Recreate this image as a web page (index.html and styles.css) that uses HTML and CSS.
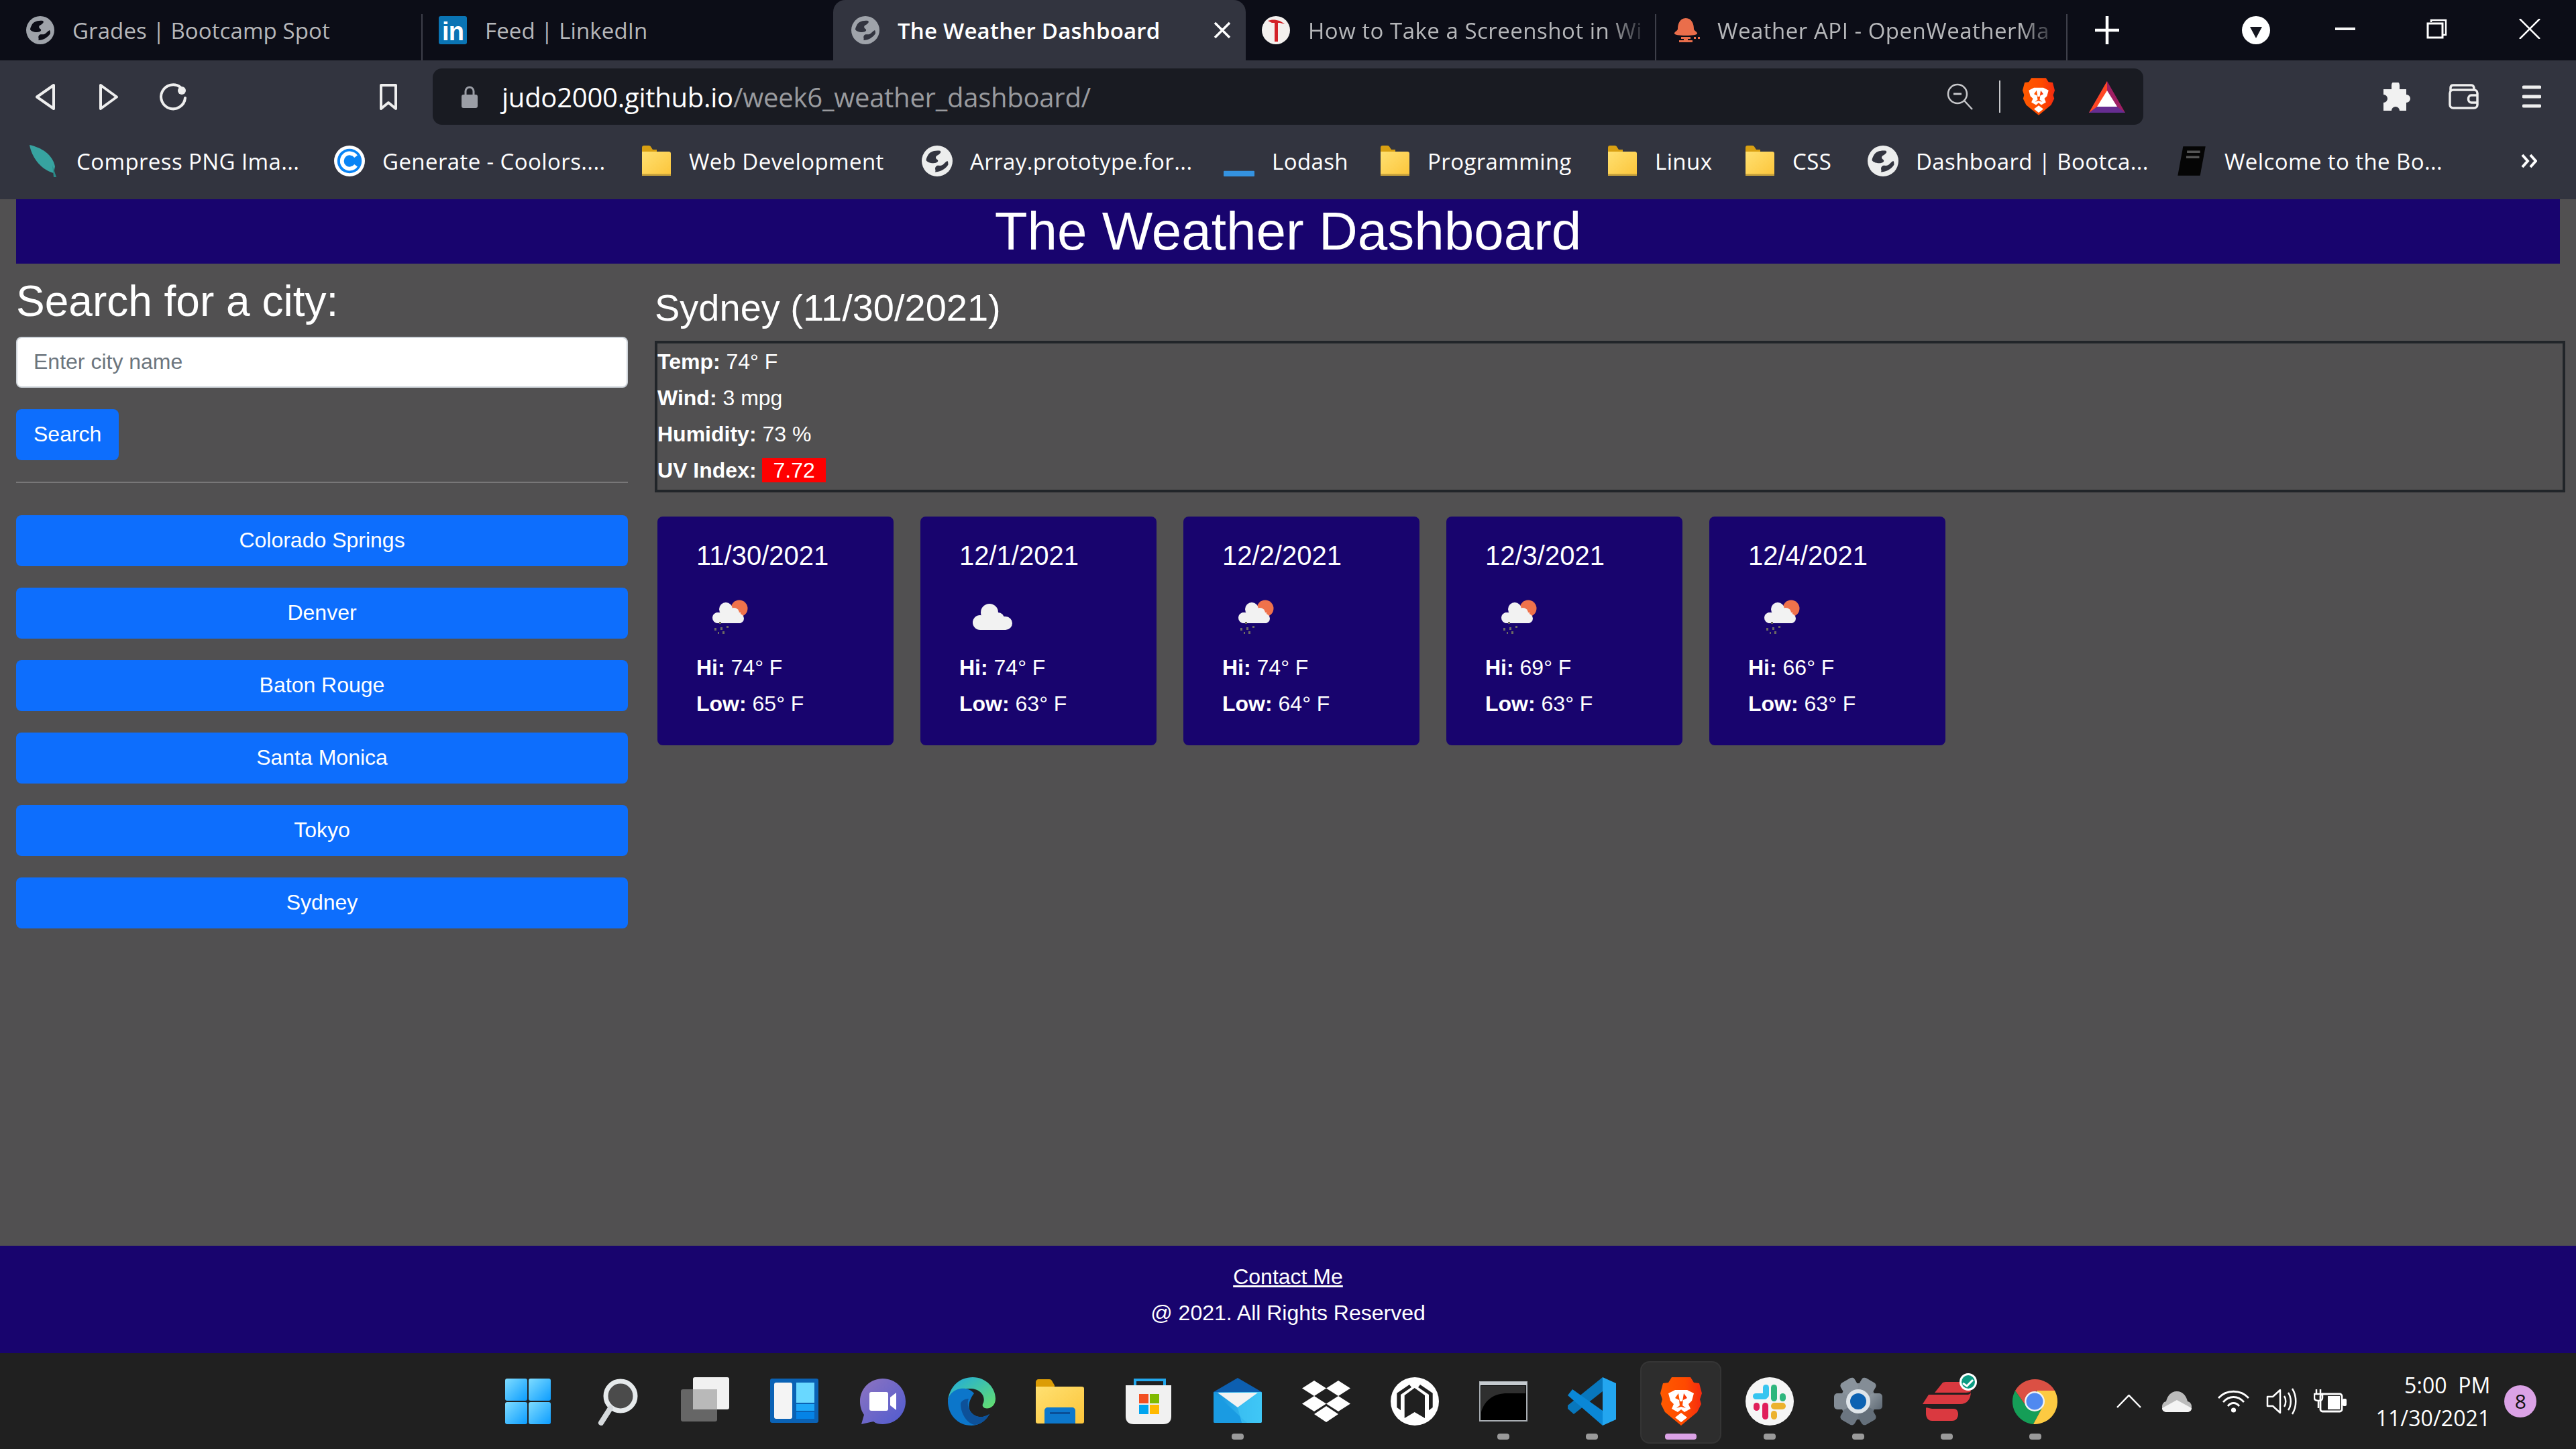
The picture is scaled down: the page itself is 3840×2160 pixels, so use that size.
FILE: index.html
```html
<!DOCTYPE html>
<html lang="en">
<head>
    <meta charset="UTF-8">
    <title>The Weather Dashboard</title>
    <link rel="stylesheet" href="styles.css">
</head>
<body>
    <svg class="defs" width="0" height="0">
        <defs>
            <linearGradient id="folderFill" x1="0" y1="0" x2="1" y2="1"><stop offset="0" stop-color="#ffe071"/><stop offset="1" stop-color="#fcc53a"/></linearGradient>
            <linearGradient id="tileFill" x1="0" y1="0" x2="1" y2="1"><stop offset="0" stop-color="#7fdcff"/><stop offset="1" stop-color="#0c9dff"/></linearGradient>
            <linearGradient id="braveFill" x1="0" y1="0" x2="1" y2="0"><stop offset="0" stop-color="#ff5a00"/><stop offset="0.6" stop-color="#ff4a00"/><stop offset="1" stop-color="#f52a10"/></linearGradient>
            <linearGradient id="edgeTop" x1="0" y1="0" x2="1" y2="1"><stop offset="0" stop-color="#1ea9e0"/><stop offset="1" stop-color="#66e06c"/></linearGradient>
            <linearGradient id="teamsFill" x1="0" y1="0" x2="1" y2="1"><stop offset="0" stop-color="#8e74c0"/><stop offset="1" stop-color="#4f5bd0"/></linearGradient>
            <linearGradient id="mailFill" x1="0" y1="0" x2="1" y2="0"><stop offset="0" stop-color="#1590dc"/><stop offset="1" stop-color="#44cdf8"/></linearGradient>
            <linearGradient id="gearFill" x1="0" y1="0" x2="1" y2="1"><stop offset="0" stop-color="#929ba3"/><stop offset="1" stop-color="#5d6873"/></linearGradient>
            <symbol id="globe" viewBox="0 0 42 42">
                <circle cx="21" cy="21" r="21" fill="currentColor"/>
                <path class="globe-hole" d="M8 14C10 9 16 6 25 7C27 9 25 11 22 13C19 14 18 17 21 19C24 21 21 24 16 24C11 24 7 22 6 20C6 18 7 16 8 14Z"/>
                <path class="globe-hole" d="M35 21C36 22 36 24 36 26C33 31 26 36 18 36C20 34 17 32 19 29C21 26 24 28 27 27C30 26 32 22 35 21Z"/>
            </symbol>
            <symbol id="folder" viewBox="0 0 46 46">
                <path fill="#d9a012" d="M2 3C2 1 3 0 5 0H12C14 0 15 1 16 3L18 6H24V14H2Z"/>
                <path fill="url(#folderFill)" d="M2 9H42C44 9 45 10 45 12V42C45 44 44 45 42 45H4C3 45 2 44 2 42Z"/>
                <rect x="2" y="42" width="43" height="3" fill="#c9a33c"/>
            </symbol>
            <symbol id="lion" viewBox="0 0 62 72">
                <path fill="url(#braveFill)" d="M17 0H45L50 8L58 9L62 24L59 33L61 40L55 52L31 72L7 52L1 40L3 33L0 24L4 9L12 8Z"/>
                <path fill="#fff" d="M12 24L22 19H40L50 24L47 35L42 40L45 47L36 52L31 48L26 52L17 47L20 40L15 35Z"/>
                <path fill="url(#braveFill)" d="M27 24L22 31L28 34L29 42L24 46L31 44L38 46L33 42L34 34L40 31L35 24L33 36H29Z"/>
                <path fill="#fff" d="M31 53L40 60L31 67L22 60Z"/>
            </symbol>
            <symbol id="rainIcon" viewBox="0 0 100 100">
                <circle cx="66" cy="40" r="12.5" fill="#f0724b"/>
                <g fill="#f2f2f2">
                    <circle cx="46" cy="41" r="10"/>
                    <circle cx="34" cy="54" r="8"/>
                    <circle cx="58" cy="47" r="8"/>
                    <circle cx="66" cy="55" r="7"/>
                    <rect x="32" y="46" width="36" height="16"/>
                </g>
                <g fill="#6d6a62">
                    <rect x="36" y="60" width="3" height="3"/>
                    <rect x="29" y="69" width="3" height="4"/>
                    <rect x="38" y="68" width="3" height="4"/>
                    <rect x="47" y="66" width="3" height="3"/>
                    <rect x="34" y="75" width="2" height="3"/>
                    <rect x="41" y="74" width="3" height="4"/>
                </g>
            </symbol>
            <symbol id="cloudIcon" viewBox="0 0 100 100">
                <g fill="#f2f2f2">
                    <circle cx="47" cy="46" r="13"/>
                    <circle cx="33" cy="61" r="11"/>
                    <circle cx="60" cy="55" r="9"/>
                    <circle cx="71" cy="62" r="10"/>
                    <rect x="33" y="52" width="38" height="20"/>
                </g>
            </symbol>
        </defs>
    </svg>

    <div class="tabstrip">
        <div class="tab tab-first">
            <svg class="favicon globe-dim"><use href="#globe"/></svg>
            <span class="tab-title">Grades | Bootcamp Spot</span>
        </div>
        <div class="tab tab-divided tab-second">
            <span class="favicon linkedin">in</span>
            <span class="tab-title">Feed | LinkedIn</span>
        </div>
        <div class="tab tab-active">
            <svg class="favicon globe-dim"><use href="#globe"/></svg>
            <span class="tab-title">The Weather Dashboard</span>
            <svg class="tab-close" viewBox="0 0 26 26"><path d="M2 2L24 24M24 2L2 24" stroke="#fff" stroke-width="3.5"/></svg>
        </div>
        <div class="tab">
            <svg class="favicon" viewBox="0 0 42 42"><circle cx="21" cy="21" r="21" fill="#f4f0ee"/><path d="M9 7C16 4 27 5 34 12L27 10H24V38H19V10H15Z" fill="#d32027"/></svg>
            <span class="tab-title tab-fade">How to Take a Screenshot in Wi</span>
        </div>
        <div class="tab tab-divided">
            <svg class="favicon favicon-wide" viewBox="0 0 45 36"><path d="M22 0C31 0 34 9 34 16C34 19 39 20 39 23C39 25 32 26 22 26C12 26 5 25 5 23C5 20 10 19 10 16C10 9 13 0 22 0Z" fill="#ea6e4b"/><path d="M15 28H29V31H25V33H32V36H12V33H19V31H15Z" fill="#ea6e4b"/><path d="M34 28H37V31H34ZM40 28H43V31H40Z" fill="#ea6e4b"/></svg>
            <span class="tab-title tab-fade">Weather API - OpenWeatherMa</span>
        </div>
        <div class="window-controls tab-divided">
            <svg class="ctl-plus" viewBox="0 0 36 44"><path d="M18 1V43M0 22H36" stroke="#fff" stroke-width="4.5"/></svg>
            <svg class="ctl-circle" viewBox="0 0 42 42"><circle cx="21" cy="21" r="21" fill="#fff"/><path d="M12 16H30L21 33Z" fill="#15161f"/></svg>
            <svg class="ctl-min" viewBox="0 0 30 4"><rect width="30" height="4" fill="#f4f4f4"/></svg>
            <svg class="ctl-restore" viewBox="0 0 31 30"><path d="M7 5V2H29V24H25" fill="none" stroke="#fff" stroke-width="2.5"/><rect x="2" y="7" width="22" height="21" fill="none" stroke="#fff" stroke-width="3"/></svg>
            <svg class="ctl-close" viewBox="0 0 32 30"><path d="M1 0L31 30M31 0L1 30" stroke="#fff" stroke-width="2.5"/></svg>
        </div>
    </div>

    <div class="toolbar">
        <svg class="nav-back" viewBox="0 0 32 41"><path d="M29 3L4 20.5L29 38Z" fill="none" stroke="#eee" stroke-width="4" stroke-linejoin="round"/></svg>
        <svg class="nav-forward" viewBox="0 0 30 41"><path d="M3 3L27 20.5L3 38Z" fill="none" stroke="#eee" stroke-width="4" stroke-linejoin="round"/></svg>
        <svg class="nav-reload" viewBox="0 0 40 41"><path d="M31 6A18 18 0 1 0 38 22" fill="none" stroke="#eee" stroke-width="4" stroke-linecap="round"/><circle cx="33" cy="11" r="6" fill="#eee"/></svg>
        <svg class="nav-bookmark" viewBox="0 0 28 41"><path d="M3 3H25V38L14 29L3 38Z" fill="none" stroke="#eee" stroke-width="4" stroke-linejoin="round"/></svg>
        <div class="addressbar">
            <svg class="lock" viewBox="0 0 24 33"><path d="M6 14V8A6 6 0 0 1 18 8V14" fill="none" stroke="#9b9ea6" stroke-width="3"/><rect y="13" width="24" height="20" rx="3" fill="#9b9ea6"/></svg>
            <div class="url">judo2000.github.io<span class="url-path">/week6_weather_dashboard/</span></div>
            <svg class="zoom-out" viewBox="0 0 40 40"><circle cx="16" cy="16" r="14" fill="none" stroke="#c6c7ca" stroke-width="2.5"/><path d="M10 16H22" stroke="#c6c7ca" stroke-width="3"/><path d="M26 26L38 39" stroke="#c6c7ca" stroke-width="2.5"/></svg>
            <span class="addr-sep"></span>
            <svg class="addr-brave"><use href="#lion"/></svg>
            <svg class="addr-bat" viewBox="0 0 54 47"><path d="M27 0L54 47H0Z" fill="#9e1f63"/><path d="M27 0L0 47H14L27 18Z" fill="#ff4724"/><path d="M27 14L42 38H12Z" fill="#fff"/><path d="M12 38H42L54 47H0Z" fill="#662d91"/></svg>
        </div>
        <svg class="tool-puzzle" viewBox="0 0 44 42"><path d="M16 4A6 6 0 0 1 28 4V10H38V18A6 6 0 1 1 38 30V42H28A6 6 0 0 0 16 42H4V30A6 6 0 1 0 4 18V10H16Z" fill="#f1f1f1"/></svg>
        <svg class="tool-wallet" viewBox="0 0 45 38"><path d="M3 10V6C3 3 5 2 7 2H34C37 2 38 4 38 8" fill="none" stroke="#eee" stroke-width="3.5"/><rect x="2" y="9" width="41" height="27" rx="5" fill="none" stroke="#eee" stroke-width="3.5"/><path d="M44 17H34C28 17 28 28 34 28H44" fill="none" stroke="#eee" stroke-width="3.5"/></svg>
        <svg class="tool-menu" viewBox="0 0 28 34"><path d="M2 3H26M2 17H26M2 31H26" stroke="#eee" stroke-width="5" stroke-linecap="round"/></svg>
    </div>

    <div class="bookmarks">
        <div class="bookmark">
            <svg class="bm-icon bm-leaf" viewBox="0 0 46 48"><path d="M2 0C20 4 36 14 40 32L38 42C22 38 6 22 2 0Z" fill="#37a3a0"/><path d="M36 30L42 48H38Z" fill="#2a8a88"/></svg>
            <span>Compress PNG Ima...</span>
        </div>
        <div class="bookmark">
            <svg class="bm-icon" viewBox="0 0 48 48"><circle cx="24" cy="24" r="24" fill="#fff"/><circle cx="24" cy="24" r="19" fill="#0a84f5"/><path d="M34 17A12 12 0 1 0 34 31" fill="none" stroke="#fff" stroke-width="6"/></svg>
            <span>Generate - Coolors....</span>
        </div>
        <div class="bookmark"><svg class="bm-icon"><use href="#folder"/></svg><span>Web Development</span></div>
        <div class="bookmark"><svg class="bm-icon globe-light"><use href="#globe"/></svg><span>Array.prototype.for...</span></div>
        <div class="bookmark">
            <svg class="bm-icon" viewBox="0 0 44 44"><rect y="36" width="44" height="8" rx="1" fill="#3492e0"/></svg>
            <span>Lodash</span>
        </div>
        <div class="bookmark"><svg class="bm-icon"><use href="#folder"/></svg><span>Programming</span></div>
        <div class="bookmark"><svg class="bm-icon"><use href="#folder"/></svg><span>Linux</span></div>
        <div class="bookmark"><svg class="bm-icon"><use href="#folder"/></svg><span>CSS</span></div>
        <div class="bookmark"><svg class="bm-icon globe-light"><use href="#globe"/></svg><span>Dashboard | Bootca...</span></div>
        <div class="bookmark">
            <svg class="bm-icon" viewBox="0 0 40 40"><path d="M9 1H38L31 39H2Z" fill="#050505"/><path d="M14 8H31M13 15H30" stroke="#555" stroke-width="3"/></svg>
            <span>Welcome to the Bo...</span>
        </div>
        <div class="bookmark bm-more">
            <svg viewBox="0 0 24 22" width="24" height="22"><path d="M2 2L10 11L2 20M14 2L22 11L14 20" fill="none" stroke="#fff" stroke-width="4"/></svg>
        </div>
    </div>

    <header class="site-header">
        <h1>The Weather Dashboard</h1>
    </header>

    <main class="main">
        <section class="sidebar">
            <h2>Search for a city:</h2>
            <input class="city-input" type="text" placeholder="Enter city name">
            <button class="btn btn-search">Search</button>
            <hr class="divider">
            <div class="city-list">
                <button class="btn">Colorado Springs</button>
                <button class="btn">Denver</button>
                <button class="btn">Baton Rouge</button>
                <button class="btn">Santa Monica</button>
                <button class="btn">Tokyo</button>
                <button class="btn">Sydney</button>
            </div>
        </section>

        <section class="content">
            <h3>Sydney (11/30/2021)</h3>
            <div class="today">
                <p><b>Temp:</b> 74° F</p>
                <p><b>Wind:</b> 3 mpg</p>
                <p><b>Humidity:</b> 73 %</p>
                <p><b>UV Index:</b> <span class="uv">7.72</span></p>
            </div>
            <div class="forecast">
                <div class="card">
                    <h5>11/30/2021</h5>
                    <svg class="weather-icon"><use href="#rainIcon"/></svg>
                    <p><b>Hi:</b> 74° F</p>
                    <p><b>Low:</b> 65° F</p>
                </div>
                <div class="card">
                    <h5>12/1/2021</h5>
                    <svg class="weather-icon"><use href="#cloudIcon"/></svg>
                    <p><b>Hi:</b> 74° F</p>
                    <p><b>Low:</b> 63° F</p>
                </div>
                <div class="card">
                    <h5>12/2/2021</h5>
                    <svg class="weather-icon"><use href="#rainIcon"/></svg>
                    <p><b>Hi:</b> 74° F</p>
                    <p><b>Low:</b> 64° F</p>
                </div>
                <div class="card">
                    <h5>12/3/2021</h5>
                    <svg class="weather-icon"><use href="#rainIcon"/></svg>
                    <p><b>Hi:</b> 69° F</p>
                    <p><b>Low:</b> 63° F</p>
                </div>
                <div class="card">
                    <h5>12/4/2021</h5>
                    <svg class="weather-icon"><use href="#rainIcon"/></svg>
                    <p><b>Hi:</b> 66° F</p>
                    <p><b>Low:</b> 63° F</p>
                </div>
            </div>
        </section>
    </main>

    <footer class="site-footer">
        <a href="#">Contact Me</a>
        <p>@ 2021. All Rights Reserved</p>
    </footer>

    <div class="taskbar">
        <div class="task-icons">
            <div class="task">
                <svg viewBox="0 0 72 72"><g fill="url(#tileFill)"><rect x="2" y="2" width="33" height="33" rx="3"/><rect x="37" y="2" width="33" height="33" rx="3"/><rect x="2" y="37" width="33" height="33" rx="3"/><rect x="37" y="37" width="33" height="33" rx="3"/></g></svg>
            </div>
            <div class="task">
                <svg viewBox="0 0 72 72"><circle cx="42" cy="28" r="22" fill="#4b4b4b" stroke="#e6eaec" stroke-width="7"/><path d="M27 46L13 68" stroke="#d5d9dc" stroke-width="8" stroke-linecap="round"/></svg>
            </div>
            <div class="task">
                <svg viewBox="0 0 72 72"><rect x="0" y="18" width="54" height="48" rx="3" fill="#666"/><rect x="18" y="0" width="54" height="48" rx="3" fill="#f1f1f1"/><rect x="18" y="18" width="36" height="30" fill="#b9b9b9"/></svg>
            </div>
            <div class="task">
                <svg viewBox="0 0 72 72"><rect y="2" width="72" height="66" rx="3" fill="#0a62b5"/><rect x="6" y="8" width="27" height="54" rx="3" fill="#f4f4f4"/><rect x="39" y="8" width="27" height="30" fill="#69d8ff"/><rect x="39" y="40" width="27" height="10" fill="#1ea8f8"/><rect x="39" y="52" width="27" height="10" fill="#0583e6"/></svg>
            </div>
            <div class="task">
                <svg viewBox="0 0 72 72"><path d="M36 2C54 2 70 16 70 36C70 56 54 70 36 70C30 70 26 69 22 66L4 70L8 56C4 50 2 44 2 36C2 16 18 2 36 2Z" fill="url(#teamsFill)"/><rect x="16" y="22" width="28" height="28" rx="3" fill="#fff"/><path d="M47 30L56 23V49L47 42Z" fill="#fff"/></svg>
            </div>
            <div class="task">
                <svg viewBox="0 0 72 72"><path d="M1 34C4 14 18 0 38 0C58 0 72 16 72 32C72 44 62 48 56 46C52 44 52 41 54 38C57 31 52 18 36 17C22 16 8 24 1 34Z" fill="url(#edgeTop)"/><path d="M1 36C1 56 16 72 36 72C46 72 56 67 63 55C52 62 40 60 34 50C30 42 34 32 40 24C28 10 2 18 1 36Z" fill="#0c76ca"/><path d="M20 40C20 54 30 70 42 71C50 70 58 64 63 55C52 62 40 60 34 50C30 44 30 36 32 32C26 32 20 36 20 40Z" fill="#0d5199"/></svg>
            </div>
            <div class="task">
                <svg viewBox="0 0 72 72"><path d="M0 7C0 5 2 3 4 3H20C23 3 24 5 25 7L28 12V20H0Z" fill="#dc9d06"/><path d="M0 14H68C71 14 72 15 72 17V66C72 68 71 69 69 69H3C1 69 0 68 0 66Z" fill="url(#folderFill)"/><path d="M13 69V50C13 47 15 45 18 45H54C57 45 59 47 59 50V69Z" fill="#0d78cc"/><rect x="21" y="52" width="30" height="3" fill="#0a4f97"/></svg>
            </div>
            <div class="task">
                <svg viewBox="0 0 72 72"><path d="M16 16V4H60V18" fill="none" stroke="#22a8ee" stroke-width="4"/><path d="M2 12H70V58C70 66 66 70 58 70H14C6 70 2 66 2 58Z" fill="#f1f1f1"/><rect x="22" y="25" width="14" height="14" fill="#f25022"/><rect x="38" y="25" width="14" height="14" fill="#7fba00"/><rect x="22" y="41" width="14" height="14" fill="#00a4ef"/><rect x="38" y="41" width="14" height="14" fill="#ffb900"/></svg>
            </div>
            <div class="task">
                <svg viewBox="0 0 72 72"><path d="M36 1L72 22V30H0V22Z" fill="#0d5fb0"/><rect y="22" width="72" height="46" rx="2" fill="url(#mailFill)"/><path d="M6 23H66L36 45Z" fill="#f2f2f2"/><path d="M0 22L50 68H2C1 68 0 67 0 66Z" fill="#1a9be2"/><path d="M72 22V66C72 67 71 68 70 68H42L36 45Z" fill="#3fc4f5" opacity="0.7"/></svg>
                <span class="dot"></span>
            </div>
            <div class="task">
                <svg viewBox="0 0 72 72"><path fill="#fff" d="M18 5L36 16.5L18 28L0 16.5ZM54 5L72 16.5L54 28L36 16.5ZM18 28L36 39.5L18 51L0 39.5ZM54 28L72 39.5L54 51L36 39.5ZM36 43L54 55L36 67L18 55Z"/></svg>
            </div>
            <div class="task">
                <svg viewBox="0 0 72 72"><circle cx="36" cy="36" r="36" fill="#fff"/><path fill="#202020" d="M35.7 16L51 27V61L35.7 52L20.7 61V27Z"/><path fill="#202020" d="M28 11L9.3 23.7V45L15 49.3V26L31 15Z"/><path fill="#202020" d="M44 11L62.7 23.7V45L57 49.3V26L41 15Z"/></svg>
            </div>
            <div class="task">
                <svg viewBox="0 0 72 72"><rect x="1" y="7" width="70" height="58" fill="#000" stroke="#a9aeb3" stroke-width="2"/><rect x="1" y="7" width="70" height="5" fill="#c6cbd0"/><path d="M3 52C8 34 22 24 42 24H69V13H3Z" fill="#2f2f2f"/></svg>
                <span class="dot"></span>
            </div>
            <div class="task">
                <svg viewBox="0 0 72 72"><path d="M52 0L72 9V63L52 72Z" fill="#23a6f0"/><path d="M52 0V21L9 55L0 47V42Z" fill="#0877bd"/><path d="M0 27L7 18L52 50V72Z" fill="#0a87d6"/></svg>
                <span class="dot"></span>
            </div>
            <div class="task task-active">
                <svg viewBox="0 0 72 72"><use href="#lion" x="5" width="62" height="72"/></svg>
                <span class="dot dot-active"></span>
            </div>
            <div class="task">
                <svg viewBox="0 0 72 72"><circle cx="36" cy="36" r="36" fill="#f5f5f5"/><rect x="26" y="11" width="9" height="20" rx="4.5" fill="#36c5f0"/><rect x="11" y="24" width="22" height="9" rx="4.5" fill="#36c5f0"/><rect x="38" y="11" width="9" height="25" rx="4.5" fill="#2eb67d"/><rect x="51" y="24" width="9" height="12" rx="4.5" fill="#2eb67d"/><rect x="12" y="38" width="9" height="12" rx="4.5" fill="#e01e5a"/><rect x="25" y="38" width="9" height="25" rx="4.5" fill="#e01e5a"/><rect x="38" y="38" width="22" height="10" rx="5" fill="#ecb22e"/><rect x="38" y="50" width="9" height="13" rx="4.5" fill="#ecb22e"/></svg>
                <span class="dot"></span>
            </div>
            <div class="task">
                <svg viewBox="0 0 72 72"><g fill="url(#gearFill)"><circle cx="36" cy="36" r="27"/><rect x="52" y="24" width="20" height="24" rx="5"/><rect x="52" y="24" width="20" height="24" rx="5" transform="rotate(60 36 36)" fill="#646f7a"/><rect x="52" y="24" width="20" height="24" rx="5" transform="rotate(120 36 36)" fill="#6c7681"/><rect x="52" y="24" width="20" height="24" rx="5" transform="rotate(180 36 36)" fill="#848d96"/><rect x="52" y="24" width="20" height="24" rx="5" transform="rotate(240 36 36)" fill="#8a939c"/><rect x="52" y="24" width="20" height="24" rx="5" transform="rotate(300 36 36)" fill="#848d96"/></g><circle cx="36" cy="36" r="18" fill="#dfe5ea"/><circle cx="36" cy="36" r="12" fill="#0c62b2"/></svg>
                <span class="dot"></span>
            </div>
            <div class="task">
                <svg class="svg-open" viewBox="0 0 72 72"><path d="M30 8C32 7 34 7 36 7H64L72 20C72 22 70 23 62 23H18Z" fill="#da3940"/><path d="M9 26H66C70 26 72 24 72 21C72 33 66 40 56 40H0Z" fill="#da3940"/><path d="M5 46C5 44 9 46 14 47H46C52 47 53 52 53 55C53 60 50 65 44 65H14C8 65 5 60 5 54Z" fill="#da3940"/><circle cx="68" cy="7" r="13" fill="#fff"/><circle cx="68" cy="7" r="10" fill="#0a9b82"/><path d="M60 9L66 13L75 4" fill="none" stroke="#fff" stroke-width="3"/></svg>
                <span class="dot"></span>
            </div>
            <div class="task">
                <svg viewBox="0 0 72 72"><path d="M6 20A34 34 0 0 1 65 20H38L20 40Z" fill="#db5044"/><path d="M6 20A34 34 0 0 0 33 70L47 44L20 40Z" fill="#159e57"/><path d="M65 20A34 34 0 0 1 33 70L47 44L38 20Z" fill="#fdca42"/><circle cx="35" cy="36" r="15" fill="#f2f2f2"/><circle cx="35" cy="36" r="12.5" fill="#5089f0"/></svg>
                <span class="dot"></span>
            </div>
        </div>
        <div class="tray">
            <svg class="tray-chevron" viewBox="0 0 37 20"><path d="M1 19L18.5 1L36 19" fill="none" stroke="#fff" stroke-width="2.5"/></svg>
            <svg class="tray-cloud" viewBox="0 0 48 32"><path d="M2 24C2 20 4 17 8 16C10 8 15 1 24 1C33 1 38 8 40 16C44 17 46 20 46 24C46 29 43 32 38 32H10C5 32 2 29 2 24Z" fill="#bcbcbc"/><path d="M2 26L24 14L46 26C46 30 43 32 38 32H10C5 32 2 30 2 26Z" fill="#f4f4f4"/></svg>
            <svg class="tray-wifi" viewBox="0 0 49 34"><g fill="none" stroke="#fff" stroke-width="2.8"><path d="M2 12C14 -1 35 -1 47 12"/><path d="M9 18C18 8 31 8 40 18"/><path d="M16 24C21 18 28 18 33 24"/></g><circle cx="24.5" cy="30" r="3.6" fill="#fff"/></svg>
            <svg class="tray-speaker" viewBox="0 0 47 40"><path d="M2 13H10L21 3V37L10 27H2Z" fill="none" stroke="#fff" stroke-width="2.5" stroke-linejoin="round"/><g fill="none" stroke="#fff" stroke-width="2.5"><path d="M27 12C30 16 30 24 27 28"/><path d="M33 7C38 14 38 26 33 33"/><path d="M39 1C46 12 46 28 39 39"/></g></svg>
            <svg class="tray-battery" viewBox="0 0 50 35"><path d="M4 0V7M10 0V7M1 7H13V13C13 16 10 17 7 17C4 17 1 16 1 13ZM7 17V28" fill="none" stroke="#fff" stroke-width="2.5"/><rect x="10" y="7" width="32" height="26" rx="3" fill="none" stroke="#fff" stroke-width="2.8"/><rect x="21" y="10" width="18" height="20" fill="#fff"/><rect x="43" y="14" width="6" height="11" rx="2" fill="#fff"/></svg>
            <div class="clock">
                <span>5:00 PM</span>
                <span>11/30/2021</span>
            </div>
            <span class="notify">8</span>
        </div>
    </div>
</body>
</html>
```

FILE: styles.css
```css
* {
    box-sizing: border-box;
}
html, body {
    height: 100%;
}
body {
    margin: 0;
    display: flex;
    flex-direction: column;
    height: 100vh;
    overflow: hidden;
    background-color: #515051;
    color: #fff;
    font-family: "Liberation Sans", Arial, sans-serif;
    font-size: 32px;
}
.defs {
    position: absolute;
}
svg {
    display: block;
    flex: none;
}

/* browser chrome */
.tabstrip {
    display: grid;
    grid-template-columns: 628px 614px 615px 610px 613px 1fr;
    height: 90px;
    flex: none;
    background-color: #0c0d17;
    font-family: "Open Sans", sans-serif;
    font-size: 33px;
    letter-spacing: 0.1px;
    color: #b6b7ba;
}
.tab {
    display: flex;
    align-items: center;
    gap: 27px;
    height: 90px;
    padding: 0 8px 0 24px;
    min-width: 0;
}
.tab-first {
    padding-left: 39px;
}
.tab-second {
    padding-left: 26px;
}
.tab-divided {
    position: relative;
}
.tab-divided::before {
    content: "";
    position: absolute;
    left: 0;
    top: 21px;
    bottom: 0;
    width: 2px;
    background-color: #3e3f4a;
}
.tab-active {
    padding: 0 22px 0 27px;
    background-color: #32343f;
    border-radius: 18px 18px 0 0;
    color: #fff;
    font-weight: 600;
    letter-spacing: 0.2px;
}
.favicon {
    width: 42px;
    height: 42px;
    flex: none;
}
.favicon-wide {
    width: 45px;
    height: 36px;
    margin-right: -3px;
}
.globe-hole {
    fill: var(--hole);
}
.globe-dim {
    --hole: #0c0d17;
    color: #9fa3aa;
}
.tab-active .globe-dim {
    --hole: #32343f;
}
.globe-light {
    --hole: #32343f;
    color: #eceded;
}
.linkedin {
    display: flex;
    align-items: flex-end;
    justify-content: center;
    background-color: #0a74b4;
    border-radius: 3px;
    color: #fff;
    font-family: "Liberation Sans", sans-serif;
    font-weight: 700;
    font-size: 38px;
    line-height: 38px;
    letter-spacing: -1px;
}
.tab-title {
    flex: 1;
    min-width: 0;
    white-space: nowrap;
    overflow: hidden;
}
.tab-fade {
    letter-spacing: 0.5px;
    -webkit-mask-image: linear-gradient(to right, #000 88%, transparent 100%);
    mask-image: linear-gradient(to right, #000 88%, transparent 100%);
}
.tab-close {
    width: 26px;
    height: 26px;
}
.window-controls {
    display: flex;
    align-items: center;
}
.ctl-plus {
    width: 36px;
    height: 44px;
    margin-left: 43px;
}
.ctl-circle {
    width: 42px;
    height: 42px;
    margin-left: 183px;
}
.ctl-min {
    width: 30px;
    height: 4px;
    margin-left: 97px;
    margin-bottom: 4px;
}
.ctl-restore {
    width: 31px;
    height: 30px;
    margin-left: 106px;
    margin-bottom: 4px;
}
.ctl-close {
    width: 32px;
    height: 30px;
    margin-left: 107px;
    margin-bottom: 4px;
}

.toolbar {
    display: flex;
    align-items: center;
    flex: none;
    height: 114px;
    padding-top: 12px;
    padding-bottom: 18px;
    background-color: #32343f;
}
.nav-back {
    width: 32px;
    height: 41px;
    margin-left: 51px;
}
.nav-forward {
    width: 30px;
    height: 41px;
    margin-left: 64px;
}
.nav-reload {
    width: 40px;
    height: 41px;
    margin-left: 61px;
}
.nav-bookmark {
    width: 28px;
    height: 41px;
    margin-left: 287px;
}
.addressbar {
    display: flex;
    align-items: center;
    width: 2550px;
    height: 84px;
    margin-left: 52px;
    background-color: #191b22;
    border-radius: 14px;
}
.lock {
    width: 24px;
    height: 33px;
    margin-left: 43px;
}
.url {
    flex: 1;
    margin-left: 36px;
    font-family: "Open Sans", sans-serif;
    font-size: 40px;
    letter-spacing: -0.25px;
    white-space: nowrap;
    color: #fff;
}
.url-path {
    color: #9a9b9f;
}
.zoom-out {
    width: 40px;
    height: 40px;
}
.addr-sep {
    width: 2px;
    height: 48px;
    margin-left: 38px;
    background-color: #c6c7ca;
}
.addr-brave {
    width: 48px;
    height: 56px;
    margin-left: 33px;
}
.addr-bat {
    width: 54px;
    height: 47px;
    margin-left: 51px;
    margin-right: 27px;
}
.tool-puzzle {
    width: 44px;
    height: 42px;
    margin-left: 354px;
}
.tool-wallet {
    width: 45px;
    height: 38px;
    margin-left: 57px;
}
.tool-menu {
    width: 28px;
    height: 34px;
    margin-left: 65px;
}

.bookmarks {
    display: grid;
    grid-template-columns: 456px 457px 419px 450px 232px 339px 205px 184px 460px 514px 1fr;
    align-items: center;
    flex: none;
    height: 93px;
    padding: 0 0 21px 42px;
    background-color: #32343f;
    font-family: "Open Sans", sans-serif;
    font-size: 33px;
    letter-spacing: 0.4px;
    color: #fff;
}
.bookmark {
    display: flex;
    align-items: center;
    gap: 26px;
    white-space: nowrap;
}
.bm-icon {
    width: 46px;
    height: 46px;
}
.bm-leaf {
    height: 48px;
}

/* the page */
.site-header {
    flex: none;
    margin: 0 24px;
    background-color: #18046e;
    text-align: center;
}
h1, h2, h3, h5 {
    margin: 0;
    font-weight: 400;
    line-height: 1.2;
}
h1 {
    font-size: 80px;
}
h2 {
    font-size: 64px;
    margin-top: 2px;
    margin-bottom: 14px;
}
h3 {
    font-size: 56px;
    margin-bottom: 16px;
}
h5 {
    font-size: 40px;
    margin-bottom: 15px;
}
.main {
    display: flex;
    flex: 1;
    min-height: 0;
    padding: 16px 16px 0 24px;
}
.sidebar {
    display: flex;
    flex-direction: column;
    align-items: flex-start;
    width: 912px;
    flex: none;
}
.city-input {
    width: 100%;
    height: 76px;
    margin-bottom: 32px;
    padding: 0 24px;
    border: 2px solid #ced4da;
    border-radius: 8px;
    background-color: #fff;
    font-family: inherit;
    font-size: 32px;
    outline: none;
}
.city-input::placeholder {
    color: #6c757d;
}
.btn {
    height: 76px;
    padding: 0 24px;
    border: none;
    border-radius: 8px;
    background-color: #0d6efd;
    color: #fff;
    font-family: inherit;
    font-size: 32px;
}
.btn-search {
    padding: 0 26px;
}
.divider {
    width: 100%;
    height: 2px;
    margin: 32px 0 48px;
    border: none;
    background-color: #787778;
}
.city-list {
    display: flex;
    flex-direction: column;
    gap: 32px;
    width: 100%;
}
.content {
    flex: 1;
    min-width: 0;
    margin-left: 40px;
    padding-top: 16px;
}
.today {
    height: 226px;
    border: 4px solid #212529;
    margin-bottom: 36px;
}
p {
    margin: 0;
    line-height: 54px;
}
.uv {
    padding: 0 16px;
    background-color: #f00;
}
.forecast {
    display: flex;
    gap: 40px;
    margin-left: 4px;
}
.card {
    width: 352px;
    height: 341px;
    padding: 34px 56px 34px 58px;
    border-radius: 8px;
    background-color: #18046e;
}
.weather-icon {
    width: 100px;
    height: 100px;
    margin-left: -2px;
    margin-bottom: 1px;
}
.site-footer {
    flex: none;
    height: 160px;
    padding-top: 19px;
    background-color: #18046e;
    text-align: center;
}
.site-footer a {
    display: block;
    line-height: 54px;
    color: #fff;
}

/* windows taskbar */
.taskbar {
    display: flex;
    flex: none;
    height: 143px;
    background-color: #202020;
}
.task-icons {
    display: grid;
    grid-template-columns: repeat(18, 132.2px);
    margin-left: 721px;
}
.task {
    display: flex;
    flex-direction: column;
    align-items: center;
    padding-top: 36px;
    position: relative;
}
.task svg {
    width: 72px;
    height: 72px;
}
.task .svg-open {
    overflow: visible;
}
.task-active::before {
    content: "";
    position: absolute;
    left: 6px;
    right: 6px;
    top: 12px;
    height: 119px;
    border: 2px solid #353535;
    border-radius: 14px;
    background-color: #2d2d2d;
}
.task-active svg, .task-active .dot {
    position: relative;
}
.dot {
    width: 18px;
    height: 9px;
    margin-top: 12px;
    border-radius: 4px;
    background-color: #9a9a9a;
}
.dot-active {
    width: 47px;
    background-color: #dba2e6;
}
.tray {
    display: flex;
    align-items: center;
    height: 143px;
    margin-left: 55px;
}
.tray-chevron {
    width: 37px;
    height: 20px;
}
.tray-cloud {
    width: 48px;
    height: 32px;
    margin-left: 29px;
}
.tray-wifi {
    width: 49px;
    height: 34px;
    margin-left: 36px;
}
.tray-speaker {
    width: 47px;
    height: 40px;
    margin-left: 24px;
}
.tray-battery {
    width: 50px;
    height: 35px;
    margin-left: 24px;
}
.clock {
    display: flex;
    flex-direction: column;
    align-items: flex-end;
    gap: 10px;
    width: 213px;
    font-family: "Open Sans", sans-serif;
    font-size: 32px;
    letter-spacing: 0.1px;
    word-spacing: 8px;
    line-height: 39px;
}
.notify {
    display: flex;
    align-items: center;
    justify-content: center;
    width: 48px;
    height: 48px;
    margin-left: 21px;
    border-radius: 50%;
    background-color: #dba2e6;
    color: #111;
    font-family: "Open Sans", sans-serif;
    font-size: 30px;
}
```
